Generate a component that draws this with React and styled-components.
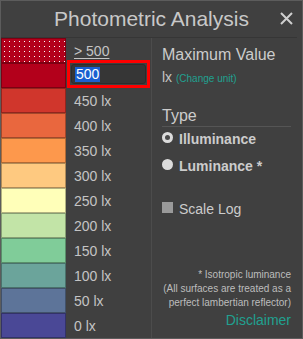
import React from "react";
import styled, { createGlobalStyle } from "styled-components";

const levels = [
  { label: "> 500", color: "#b3001b", dotted: true, link: true },
  { label: "500", color: "#b3001b", input: true },
  { label: "450 lx", color: "#d0362c" },
  { label: "400 lx", color: "#e9673e" },
  { label: "350 lx", color: "#fd984c" },
  { label: "300 lx", color: "#fec980" },
  { label: "250 lx", color: "#ffffb9" },
  { label: "200 lx", color: "#c2e4a7" },
  { label: "150 lx", color: "#80cc99" },
  { label: "100 lx", color: "#6ba49b" },
  { label: "50 lx", color: "#5d7499" },
  { label: "0 lx", color: "#4a4896" },
];

const GlobalStyle = createGlobalStyle`
  html, body {
    margin: 0;
    padding: 0;
    background: #404040;
  }
  * {
    box-sizing: border-box;
  }
`;

const Panel = styled.div`
  width: 303px;
  height: 339px;
  background: #404040;
  border: 1px solid #5c5c5c;
  font-family: "Liberation Sans", Arial, sans-serif;
  color: #c4c4c4;
  display: flex;
  flex-direction: column;
`;

const Header = styled.div`
  height: 37px;
  margin-right: 5px;
  border-bottom: 1px solid #363636;
  display: grid;
  grid-template-columns: 1fr auto 1fr;
  align-items: center;
`;

const Title = styled.div`
  grid-column: 2;
  font-size: 21px;
  line-height: 24px;
  color: #c8c8c8;
  padding-left: 5px;
`;

const Close = styled.button`
  justify-self: end;
  margin-right: 4px;
  padding: 0;
  width: 13px;
  height: 13px;
  border: 0;
  background: none;
  display: flex;
  margin-top: -1px;
`;

const Body = styled.div`
  flex: 1;
  display: flex;
`;

const Scale = styled.div`
  width: 150px;
  display: flex;
  flex-direction: column;
`;

const Row = styled.div`
  height: 25px;
  display: flex;
  align-items: center;
`;

const Swatch = styled.div`
  width: 65px;
  height: 25px;
  flex-shrink: 0;
  background-color: ${(p) => p.$color};
  border: 1px solid rgba(0, 0, 0, 0.3);
  ${(p) =>
    p.$dotted &&
    `
    background-image: radial-gradient(circle, #fff 0.6px, transparent 0.9px);
    background-size: 5px 5px;
    background-position: 0px 0px;
  `}
`;

const Label = styled.span`
  padding-left: 8px;
  font-size: 14px;
  line-height: 16px;
  color: #c4c4c4;
  text-decoration: ${(p) => (p.$link ? "underline" : "none")};
  text-underline-offset: 2px;
`;

const InputFrame = styled.div`
  flex: 1;
  align-self: flex-start;
  margin: -3px 1px 0 1px;
  height: 28px;
  border: 3px solid #ff0000;
  padding: 1px;
  display: flex;
`;

const ValueInput = styled.div`
  flex: 1;
  background: #363636;
  border: 1px solid #2c2c2c;
  border-radius: 3px;
  display: flex;
  align-items: center;
  padding-left: 3px;
`;

const Selected = styled.span`
  background: #1a5fd0;
  color: #fff;
  font-size: 14px;
  line-height: 15px;
  padding: 0 1px;
`;

const Side = styled.div`
  flex: 1;
  border-left: 1px solid #4c4c4c;
  padding: 8px 11px 10px 10px;
  display: flex;
  flex-direction: column;
`;

const Heading = styled.div`
  font-size: 16px;
  line-height: 18px;
  color: #cccccc;
  margin-top: ${(p) => p.$mt || 0}px;
  ${(p) => p.$rule && `border-bottom: 1px solid #555; padding-bottom: 1px;`}
`;

const UnitLine = styled.div`
  margin-top: 5px;
  font-size: 14px;
  line-height: 16px;
  color: #c4c4c4;
`;

const TealLink = styled.span`
  color: #20a090;
  font-size: ${(p) => p.$size}px;
`;

const Option = styled.label`
  display: flex;
  align-items: center;
  gap: 6px;
  height: 16px;
  margin-top: ${(p) => p.$mt}px;
  font-size: 14px;
  line-height: 16px;
  font-weight: ${(p) => (p.$bold ? 700 : 400)};
  color: #cccccc;
`;

const Radio = styled.span`
  width: 11px;
  height: 11px;
  border-radius: 50%;
  background: #dcdcdc;
  margin-top: -4px;
  display: flex;
  align-items: center;
  justify-content: center;
  &::after {
    content: "";
    width: 5px;
    height: 5px;
    border-radius: 50%;
    background: ${(p) => (p.$checked ? "#4a4a4a" : "transparent")};
  }
`;

const Check = styled.span`
  width: 11px;
  height: 11px;
  background: #9a9a9a;
  margin-top: -3px;
`;

const Notes = styled.div`
  margin-top: auto;
  text-align: right;
  font-size: 10px;
  line-height: 14px;
  color: #bdbdbd;
`;

const Disclaimer = styled.div`
  text-align: right;
  margin-top: 2px;
  font-size: 14px;
  line-height: 16px;
`;

export default function App() {
  return (
    <>
      <GlobalStyle />
      <Panel>
        <Header>
          <Title>Photometric Analysis</Title>
          <Close aria-label="Close">
            <svg width="13" height="13" viewBox="0 0 13 13">
              <path d="M1 1 L12 12 M12 1 L1 12" stroke="#cfcfcf" strokeWidth="2" />
            </svg>
          </Close>
        </Header>
        <Body>
          <Scale>
            {levels.map((lv) => (
              <Row key={lv.label}>
                <Swatch $color={lv.color} $dotted={lv.dotted} />
                {lv.input ? (
                  <InputFrame>
                    <ValueInput>
                      <Selected>{lv.label}</Selected>
                    </ValueInput>
                  </InputFrame>
                ) : (
                  <Label $link={lv.link}>{lv.label}</Label>
                )}
              </Row>
            ))}
          </Scale>
          <Side>
            <Heading>Maximum Value</Heading>
            <UnitLine>
              lx <TealLink $size={10}>(Change unit)</TealLink>
            </UnitLine>
            <Heading $mt={20} $rule>
              Type
            </Heading>
            <Option $bold $mt={4}>
              <Radio $checked />
              Illuminance
            </Option>
            <Option $bold $mt={11}>
              <Radio />
              Luminance *
            </Option>
            <Option $mt={27}>
              <Check />
              Scale Log
            </Option>
            <Notes>
              * Isotropic luminance
              <br />
              (All surfaces are treated as a
              <br />
              perfect lambertian reflector)
            </Notes>
            <Disclaimer>
              <TealLink $size={14}>Disclaimer</TealLink>
            </Disclaimer>
          </Side>
        </Body>
      </Panel>
    </>
  );
}
